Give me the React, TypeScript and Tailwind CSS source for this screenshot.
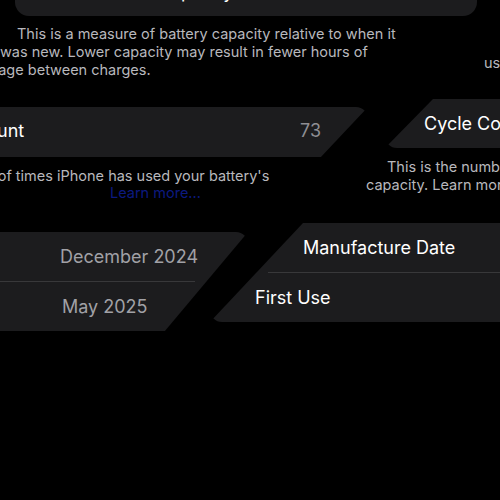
import React from "react";

export default function App() {
  return (
    <div className="relative w-[500px] h-[500px] bg-black overflow-hidden font-['Inter','Noto_Sans',sans-serif] antialiased">
      {/* Top card: Maximum Capacity */}
      <div className="absolute left-[15px] top-[-44px] w-[462px] h-[60px] rounded-[14px] bg-[#1c1c1e]">
        <div className="absolute left-[55px] top-[25px] text-[18px] leading-[22px] text-white">Maximum Capacity</div>
      </div>

      {/* Capacity description */}
      <div className="absolute left-0 top-[25px] text-[14.5px] leading-[18px] text-[#b8b8bd] whitespace-nowrap">
        <div className="pl-[17px]">This is a measure of battery capacity relative to when it</div>
        <div>was new. Lower capacity may result in fewer hours of</div>
        <div className="ml-[-18px]">usage between charges.</div>
      </div>
      <div className="absolute left-[484px] top-[54px] text-[14.5px] leading-[18px] text-[#b8b8bd]">usage</div>

      {/* Cycle count left card */}
      <div className="absolute left-[-60px] top-[107px] w-[428px] h-[50px] rounded-[12px] bg-[#1c1c1e] [clip-path:polygon(0_0,100%_0,89%_100%,0_100%)]">
        <div className="absolute left-[-20px] top-[13px] text-[18px] leading-[22px] text-white whitespace-nowrap">Cycle Count</div>
        <div className="absolute left-[360px] top-[13px] text-[18px] leading-[22px] text-[#8e8e93]">73</div>
      </div>

      {/* Cycle count right card */}
      <div className="absolute left-[385px] top-[99px] w-[160px] h-[49px] rounded-[12px] bg-[#1c1c1e] [clip-path:polygon(30%_0,100%_0,100%_100%,0_100%)]">
        <div className="absolute left-[39px] top-[14px] text-[18px] leading-[22px] text-white whitespace-nowrap">Cycle Count</div>
      </div>

      {/* Cycle count descriptions */}
      <div className="absolute left-[-59px] top-[167px] text-[14.5px] leading-[18px] text-[#b8b8bd] whitespace-nowrap">
        number of times iPhone has used your battery's
      </div>
      <div className="absolute left-[-14px] top-[184px] text-[14.5px] leading-[18px] text-[#b8b8bd] whitespace-nowrap">...</div>
      <div className="absolute left-[110px] top-[184px] text-[14.5px] leading-[18px] text-[#0c1a80] whitespace-nowrap">Learn more...</div>

      <div className="absolute left-[387px] top-[158px] text-[14.5px] leading-[18px] text-[#b8b8bd] whitespace-nowrap">This is the number of</div>
      <div className="absolute left-[366px] top-[176px] text-[14.5px] leading-[18px] text-[#b8b8bd] whitespace-nowrap">capacity. Learn more...</div>

      {/* Bottom-left card: dates */}
      <div className="absolute left-[-20px] top-[232px] w-[268px] h-[99px] rounded-[12px] bg-[#1c1c1e] [clip-path:polygon(0_0,100%_0,69%_100%,0_100%)]">
        <div className="flex flex-col h-full">
          <div className="h-[49px] flex items-center pl-[80px] text-[18px] text-[#a1a1a6]">December 2024</div>
          <div className="h-px bg-[#38383a] w-[215px]" />
          <div className="flex-1 flex items-center pl-[82px] text-[18px] text-[#a1a1a6]">May 2025</div>
        </div>
      </div>

      {/* Bottom-right card: labels */}
      <div className="absolute left-[210px] top-[223px] w-[310px] h-[99px] rounded-[12px] bg-[#1c1c1e] [clip-path:polygon(30%_0,100%_0,100%_100%,0_100%)]">
        <div className="flex flex-col h-full">
          <div className="h-[49px] flex items-center pl-[93px] text-[18px] text-white whitespace-nowrap">Manufacture Date</div>
          <div className="h-px bg-[#38383a] ml-[58px]" />
          <div className="flex-1 flex items-center pl-[45px] text-[18px] text-white">First Use</div>
        </div>
      </div>
    </div>
  );
}
